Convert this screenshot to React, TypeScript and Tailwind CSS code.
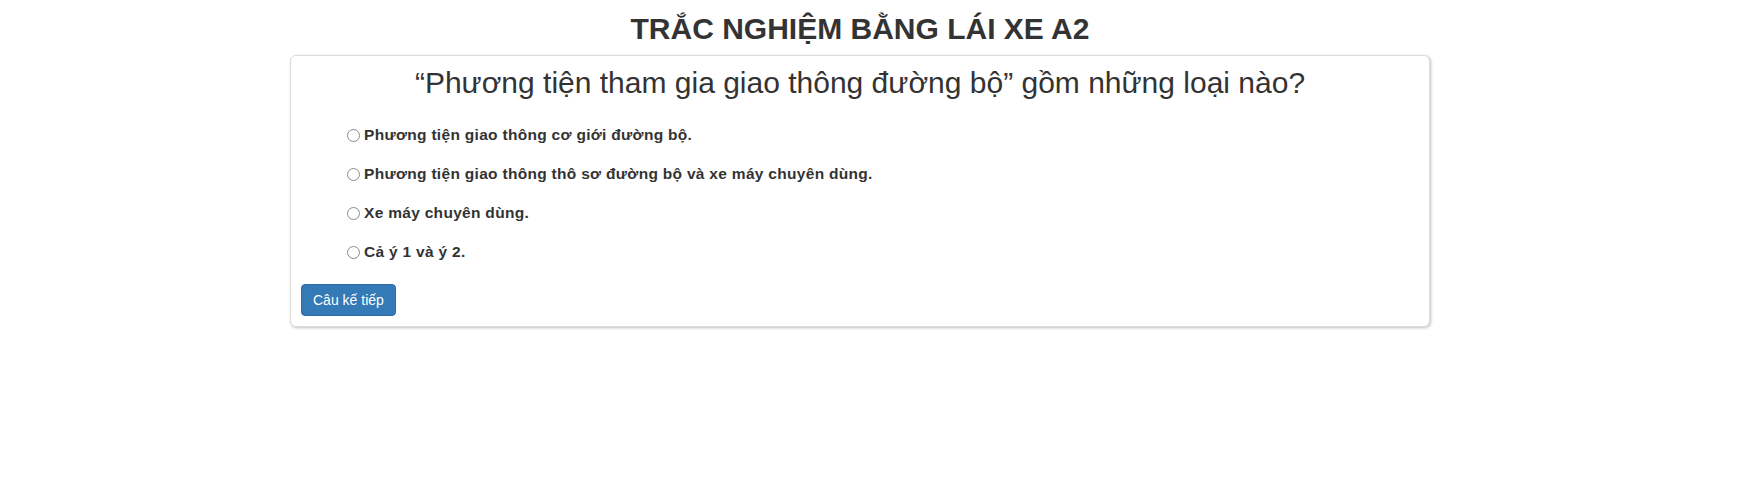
import React from "react";

const options = [
  "Phương tiện giao thông cơ giới đường bộ.",
  "Phương tiện giao thông thô sơ đường bộ và xe máy chuyên dùng.",
  "Xe máy chuyên dùng.",
  "Cả ý 1 và ý 2.",
];

export default function App() {
  return (
    <div
      className="min-h-[484px] bg-white text-[#333]"
      style={{ fontFamily: '"Liberation Sans", Arial, Helvetica, sans-serif' }}
    >
      <div className="ml-[290px] w-[1140px]">
        <h1 className="pt-[12px] text-center text-[30px] font-bold leading-[33px] text-[#333]">
          TRẮC NGHIỆM BẰNG LÁI XE A2
        </h1>
        <div className="mt-[10px] rounded-[6px] border border-[#ddd] bg-white px-[10px] pb-[10px] pt-[10px] shadow-[1px_1px_3px_rgba(0,0,0,0.25)]">
          <h2 className="text-center text-[30px] font-normal leading-[33px] text-[#333]">
            “Phương tiện tham gia giao thông đường bộ” gồm những loại nào?
          </h2>
          <div className="mt-[26px] flex flex-col gap-[19px] pl-[46px]">
            {options.map((o) => (
              <label key={o} className="flex h-[20px] items-center gap-[4px]">
                <span className="inline-block h-[13px] w-[13px] shrink-0 rounded-full border border-[#8a8a8a] bg-white" />
                <span className="text-[15.5px] font-bold leading-[20px] tracking-[0.3px] text-[#333]">{o}</span>
              </label>
            ))}
          </div>
          <button className="mt-[22px] h-[32px] rounded-[4px] border border-[#2e6da4] bg-[#337ab7] px-[11px] text-[14px] leading-[20px] text-white">
            Câu kế tiếp
          </button>
        </div>
      </div>
    </div>
  );
}
